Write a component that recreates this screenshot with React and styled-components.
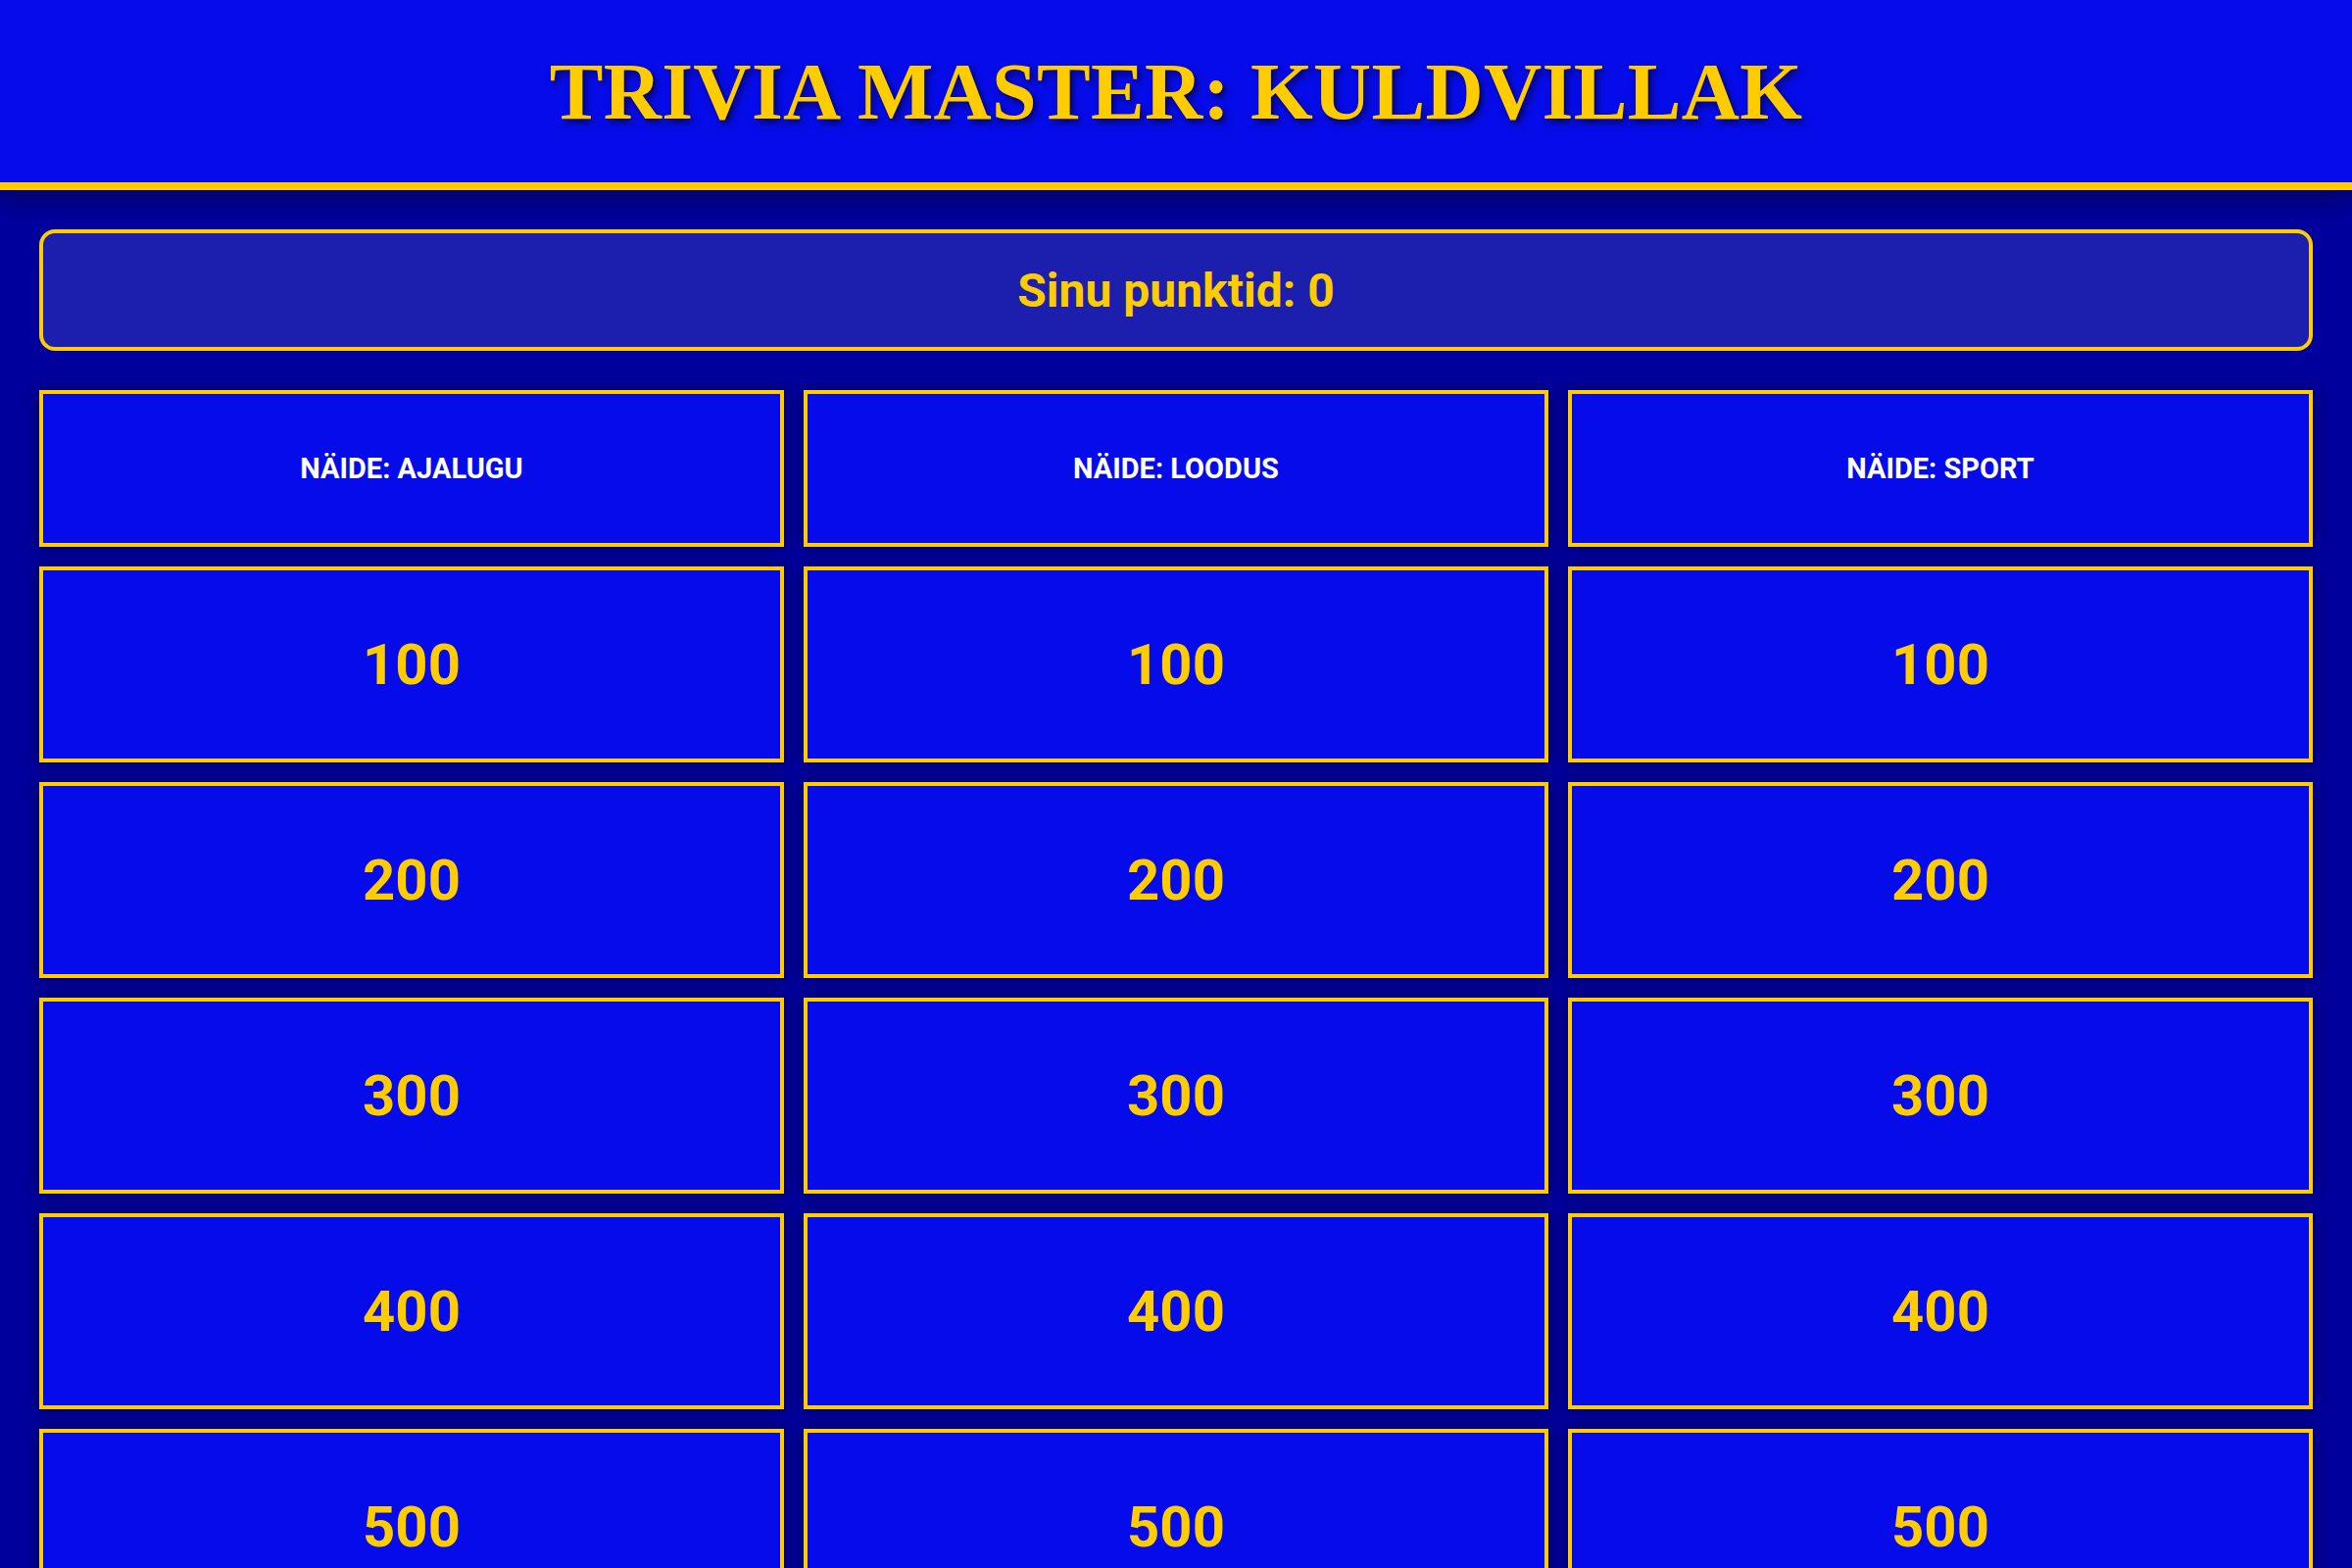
import React from 'react'
import styled, { createGlobalStyle } from 'styled-components'

const GlobalStyle = createGlobalStyle`
  * {
    box-sizing: border-box;
  }

  body {
    margin: 0;
    min-height: 100vh;
    background: #00009c;
    font-family: Roboto, 'Liberation Sans', Arial, sans-serif;
  }
`

const categories = ['NÄIDE: AJALUGU', 'NÄIDE: LOODUS', 'NÄIDE: SPORT']
const values = [100, 200, 300, 400, 500]

const App = () => {
  return (
    <>
      <GlobalStyle />
      <Header>
        <Title>TRIVIA MASTER: KULDVILLAK</Title>
      </Header>
      <Main>
        <ScoreBox>Sinu punktid: 0</ScoreBox>
        <Board>
          {categories.map((name) => (
            <CategoryCell key={name}>{name}</CategoryCell>
          ))}
          {values.map((value) =>
            categories.map((name) => (
              <ValueCell key={name + value}>{value}</ValueCell>
            ))
          )}
        </Board>
      </Main>
    </>
  )
}

export default App

const Header = styled.header`
  height: 194px;
  display: flex;
  align-items: center;
  justify-content: center;
  background: #060ce9;
  border-bottom: 8px solid #ffcc00;
  box-shadow: 0 6px 24px rgba(0, 0, 0, 0.45);
  position: relative;
`

const Title = styled.h1`
  margin: 0;
  padding-top: 2px;
  font-family: 'Liberation Serif', 'Times New Roman', serif;
  font-weight: 700;
  font-size: 82px;
  letter-spacing: 0.3px;
  color: #ffcc00;
  text-shadow: 3px 4px 7px rgba(0, 0, 0, 0.6);
`

const Main = styled.main`
  padding: 40px;
`

const ScoreBox = styled.div`
  height: 124px;
  margin-bottom: 40px;
  display: flex;
  align-items: center;
  justify-content: center;
  background: #1c1fad;
  border: 4px solid #ffcc00;
  border-radius: 16px;
  color: #ffcc00;
  font-size: 48px;
  font-weight: 700;
`

const Board = styled.div`
  display: grid;
  grid-template-columns: repeat(3, 1fr);
  gap: 20px;
`

const Cell = styled.div`
  display: flex;
  align-items: center;
  justify-content: center;
  background: #060ce9;
  border: 4px solid #ffcc00;
  box-shadow: 0 0 14px rgba(0, 0, 0, 0.45);
  font-weight: 700;
  text-align: center;
`

const CategoryCell = styled(Cell)`
  height: 160px;
  color: #ffffff;
  font-size: 29px;
`

const ValueCell = styled(Cell)`
  height: 200px;
  color: #ffcc00;
  font-size: 58px;
  cursor: pointer;
`
